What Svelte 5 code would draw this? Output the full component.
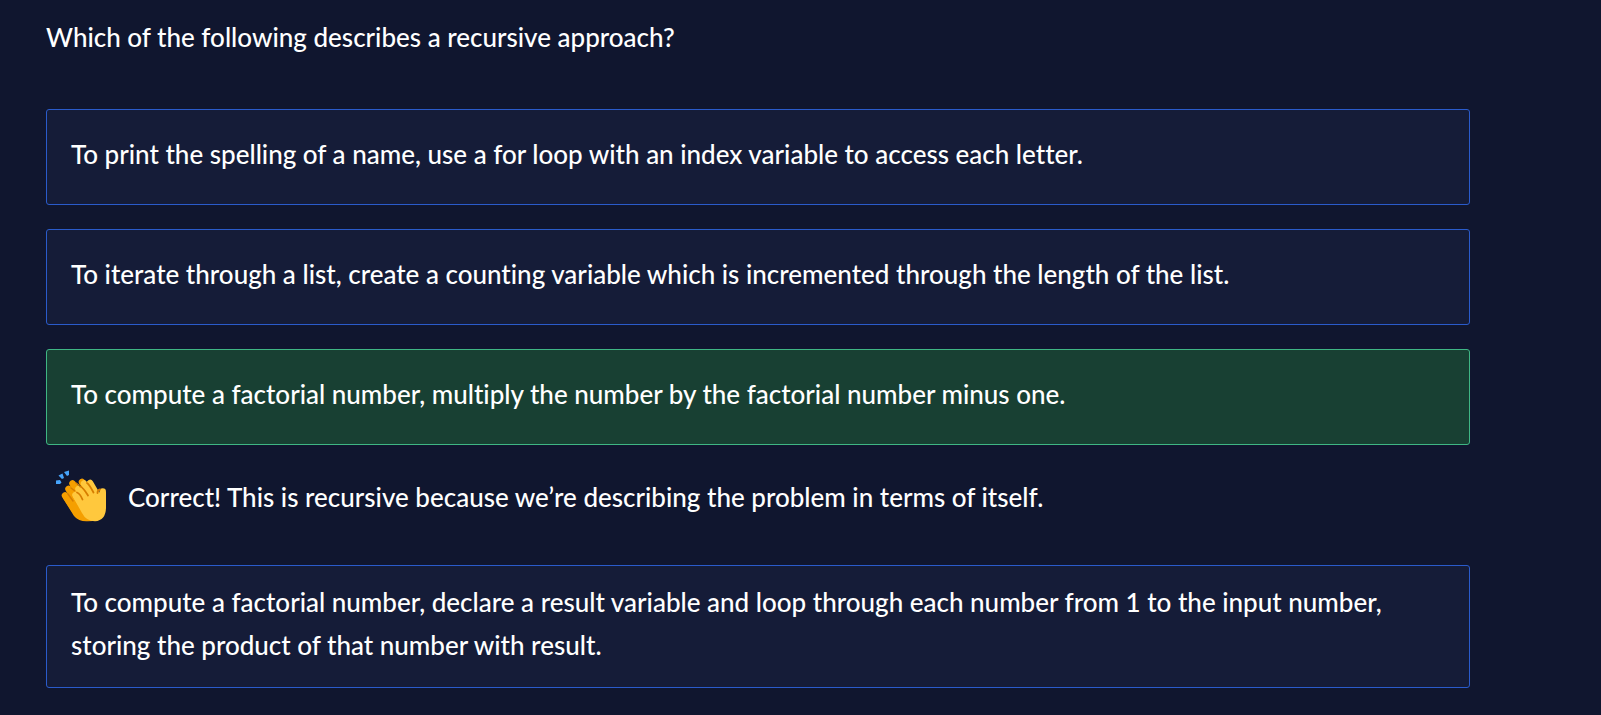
<script>
  const before = [
    'To print the spelling of a name, use a for loop with an index variable to access each letter.',
    'To iterate through a list, create a counting variable which is incremented through the length of the list.'
  ];
</script>

<main>
  <h1>Which of the following describes a recursive approach?</h1>
  <div class="options">
    {#each before as text}
      <button type="button">{text}</button>
    {/each}
    <button type="button" class="correct">To compute a factorial number, multiply the number by the factorial number minus one.</button>
    <div class="feedback">
      <svg viewBox="0 0 54 54" fill="none" stroke-linecap="round" stroke-linejoin="round" aria-hidden="true">
        <path fill="#46a4fb" d="M2 10.500l4-.500 1.500 2.500-1.500 1.500H2zM4.500 5.500l4-2 1.500 4.500-2 1zM10 2l5-1.500v4.500l-2 1z"/>
        <g stroke="#f59f00" stroke-width="6.500">
          <path d="M11 25.500L24 45M14.500 19L28 38M18.500 13.500L32 32M28 12L38 26"/>
        </g>
        <path fill="#f59f00" d="M8.500 27.500L20 46q5 6 14 5.300l5-.3-1-30-16-3z"/>
        <path stroke="#d67d00" stroke-width="1.500" d="M14 24l5 7M17 18l4 3M22 13l3 2"/>
        <g stroke="#ffc83d" stroke-width="6.500">
          <path d="M21.500 25L34 44M24.500 19L38 38M30 13.500L42 32M36 13L47 32M48.700 21.500V36"/>
        </g>
        <path fill="#ffc83d" d="M19 27L28 43q4 8 13 8.300 11-1 11-14V22l-6 2-4 2-18-3z"/>
        <path stroke="#d67d00" stroke-width="1.800" d="M23 22.500q3 1 5.500 7M26 16.500q3.500 1 8 9M33 13q2 1 6.500 9.500M43.500 23q0-3 2.500-3.500"/>
      </svg>
      <p>Correct! This is recursive because we’re describing the problem in terms of itself.</p>
    </div>
    <button type="button">To compute a factorial number, declare a result variable and loop through each number from 1 to the input number, storing the product of that number with result.</button>
  </div>
</main>

<style>
  :global(body) { margin: 0; background: #10162f; }
  main { padding: 16px 131px 26px 46px; color: #fff; font-family: Lato, sans-serif; font-size: 26px; font-weight: 500; line-height: 43px; font-variant-ligatures: none; }
  h1 { margin: 0 0 50px; font-size: 26px; line-height: 43px; font-weight: 500; }
  .options { display: grid; gap: 24px; }
  button { box-sizing: border-box; min-height: 96px; padding: 15px 24px 20px; border: 1px solid #2a5bcb; border-radius: 3px; background: #151c38; color: inherit; font: inherit; font-variant-ligatures: none; text-align: left; }
  .correct { background: #184033; border-color: #3fb684; }
  .feedback { display: flex; align-items: center; gap: 20px; min-height: 56px; padding: 0 8px 16px; }
  svg { flex: none; width: 54px; height: 54px; }
  p { margin: 0; }
</style>
